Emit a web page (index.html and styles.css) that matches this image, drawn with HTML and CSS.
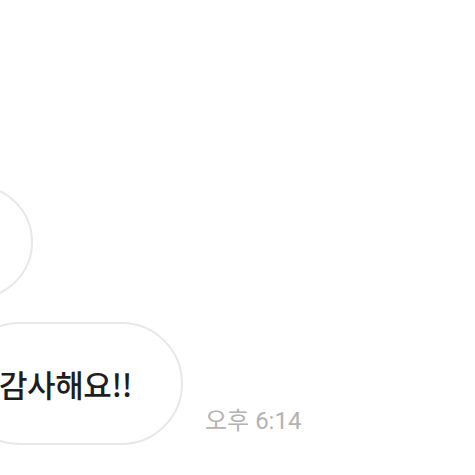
FILE: index.html
```html
<!DOCTYPE html>
<html lang="ko">
<head>
    <meta charset="UTF-8">
    <title>채팅</title>
    <link rel="stylesheet" href="styles.css">
</head>
<body>
<div class="chat">
    <div class="msg-row">
        <div class="bubble bubble--short"></div>
    </div>
    <div class="msg-row">
        <div class="bubble bubble--text">감사해요!!</div>
        <span class="msg-time">오후 6:14</span>
    </div>
</div>
</body>
</html>
```

FILE: styles.css
```css
body {
    margin: 0;
    background: #fff;
    font-family: "Noto Sans CJK KR", "Noto Sans", sans-serif;
    overflow: hidden;
}
.chat {
    display: flex;
    flex-direction: column;
    gap: 23px;
    padding-top: 185px;
}
.msg-row {
    display: flex;
    align-items: flex-end;
}
.bubble {
    box-sizing: border-box;
    border: 2px solid #e8e8e8;
    border-radius: 62px;
    background: #fff;
}
.bubble--short {
    width: 160px;
    height: 114px;
    margin-left: -127px;
}
.bubble--text {
    display: flex;
    align-items: center;
    height: 123px;
    margin-left: -42px;
    padding: 0 49px 0 39px;
    font-size: 31px;
    font-weight: 500;
    color: #1e1e1e;
    letter-spacing: -0.4px;
}
.msg-time {
    margin: 0 0 9px 22px;
    font-size: 24px;
    color: #b3b3b3;
    font-family: "Roboto", "Noto Sans CJK KR", sans-serif;
}
```
